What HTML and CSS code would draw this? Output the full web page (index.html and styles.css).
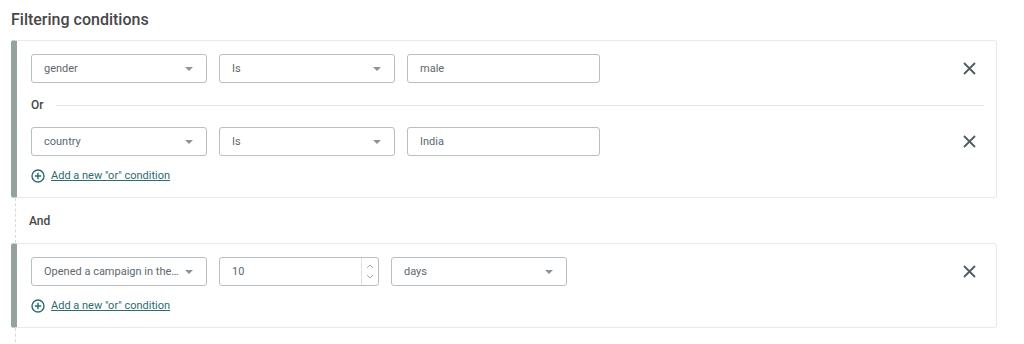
FILE: index.html
```html
<!DOCTYPE html>
<html lang="en">
<head>
    <meta charset="UTF-8">
    <meta name="viewport" content="width=device-width, initial-scale=1.0">
    <title>Filtering conditions</title>
    <link rel="stylesheet" href="styles.css">
</head>
<body>

<div class="filters">
    <div class="title">Filtering conditions</div>

    <div class="group">
        <div class="row">
            <div class="field select w176"><span>gender</span><i class="caret"></i></div>
            <div class="field select w176"><span>Is</span><i class="caret"></i></div>
            <div class="field w193"><span>male</span></div>
            <button class="remove"><svg width="13" height="13" viewBox="0 0 13 13"><path d="M1 1L12 12M12 1L1 12" stroke="#4d5b63" stroke-width="1.8"/></svg></button>
        </div>
        <div class="orRow">
            <span class="orLabel">Or</span>
            <span class="orLine"></span>
        </div>
        <div class="row">
            <div class="field select w176"><span>country</span><i class="caret"></i></div>
            <div class="field select w176"><span>Is</span><i class="caret"></i></div>
            <div class="field w193"><span>India</span></div>
            <button class="remove"><svg width="13" height="13" viewBox="0 0 13 13"><path d="M1 1L12 12M12 1L1 12" stroke="#4d5b63" stroke-width="1.8"/></svg></button>
        </div>
        <a class="addLink" href="#">
            <svg width="14" height="14" viewBox="0 0 14 14"><circle cx="7" cy="7" r="6" fill="none" stroke="#2d6b70" stroke-width="1.4"/><path d="M7 3.8V10.2M3.8 7H10.2" stroke="#2d6b70" stroke-width="1.4"/></svg>
            <span>Add a new "or" condition</span>
        </a>
    </div>

    <div class="connector"><span class="andLabel">And</span></div>

    <div class="group">
        <div class="row">
            <div class="field select w176"><span>Opened a campaign in the...</span><i class="caret"></i></div>
            <div class="field number w160">
                <span>10</span>
                <div class="spin">
                    <svg width="8" height="5" viewBox="0 0 8 5"><path d="M1 4L4 1L7 4" fill="none" stroke="#a3abb1" stroke-width="1"/></svg>
                    <svg width="8" height="5" viewBox="0 0 8 5"><path d="M1 1L4 4L7 1" fill="none" stroke="#a3abb1" stroke-width="1"/></svg>
                </div>
            </div>
            <div class="field select w176"><span>days</span><i class="caret"></i></div>
            <button class="remove"><svg width="13" height="13" viewBox="0 0 13 13"><path d="M1 1L12 12M12 1L1 12" stroke="#4d5b63" stroke-width="1.8"/></svg></button>
        </div>
        <a class="addLink" href="#">
            <svg width="14" height="14" viewBox="0 0 14 14"><circle cx="7" cy="7" r="6" fill="none" stroke="#2d6b70" stroke-width="1.4"/><path d="M7 3.8V10.2M3.8 7H10.2" stroke="#2d6b70" stroke-width="1.4"/></svg>
            <span>Add a new "or" condition</span>
        </a>
    </div>

    <div class="connector tail"></div>
</div>

</body>
</html>
```

FILE: styles.css
```css
body {
    margin: 0;
    padding: 0;
    background: #ffffff;
    font-family: Roboto, 'Liberation Sans', sans-serif;
    color: #5d6870;
}

.filters {
    padding: 0 27px 0 11px;
}

.title {
    font-size: 16px;
    font-weight: 500;
    color: #474747;
    line-height: 20px;
    padding-top: 10px;
    margin-bottom: 10px;
}

.group {
    border: 1px solid #e8eaea;
    border-left: 6px solid #95a29e;
    border-radius: 3px;
    padding: 13px 12px 13px 14px;
}

.row {
    display: flex;
    align-items: center;
    gap: 12px;
}

.field {
    height: 29px;
    box-sizing: border-box;
    border: 1px solid #b7bec4;
    border-radius: 3px;
    display: flex;
    align-items: center;
    gap: 6px;
    padding: 0 12px;
    font-size: 11px;
    color: #5d6870;
    background: #fff;
}

.field span {
    flex: 1;
    min-width: 0;
    white-space: nowrap;
    overflow: hidden;
    text-overflow: ellipsis;
}

.w176 { width: 176px; }
.w193 { width: 193px; }
.w160 { width: 160px; }

.caret {
    flex: none;
    width: 0;
    height: 0;
    border-left: 4px solid transparent;
    border-right: 4px solid transparent;
    border-top: 4px solid #8a949b;
    margin-right: 1px;
}

.number {
    padding-right: 0;
}

.spin {
    width: 16px;
    height: 100%;
    border-left: 1px solid #dde1e4;
    display: flex;
    flex-direction: column;
    align-items: center;
    justify-content: center;
    gap: 5px;
}

.spin svg {
    display: block;
}

.remove {
    margin-left: auto;
    margin-right: 8px;
    background: none;
    border: 0;
    padding: 0;
    width: 13px;
    height: 13px;
    display: flex;
}

.orRow {
    height: 44px;
    display: flex;
    align-items: center;
    gap: 12px;
}

.orLabel {
    font-size: 12px;
    font-weight: 500;
    color: #474747;
}

.orLine {
    flex: 1;
    height: 1px;
    background: #e3e6e6;
}

.addLink {
    display: flex;
    align-items: center;
    gap: 6px;
    margin-top: 12px;
    line-height: 16px;
    font-size: 11px;
    color: #2d6b70;
    width: max-content;
}

.addLink svg {
    display: block;
}

.addLink span {
    text-decoration: underline;
}

.connector {
    height: 45px;
    margin-left: 4px;
    border-left: 1px dashed #d6dada;
    display: flex;
    align-items: center;
    padding-left: 13px;
}

.connector.tail {
    height: 20px;
}

.andLabel {
    font-size: 12px;
    font-weight: 500;
    color: #474747;
}
```
